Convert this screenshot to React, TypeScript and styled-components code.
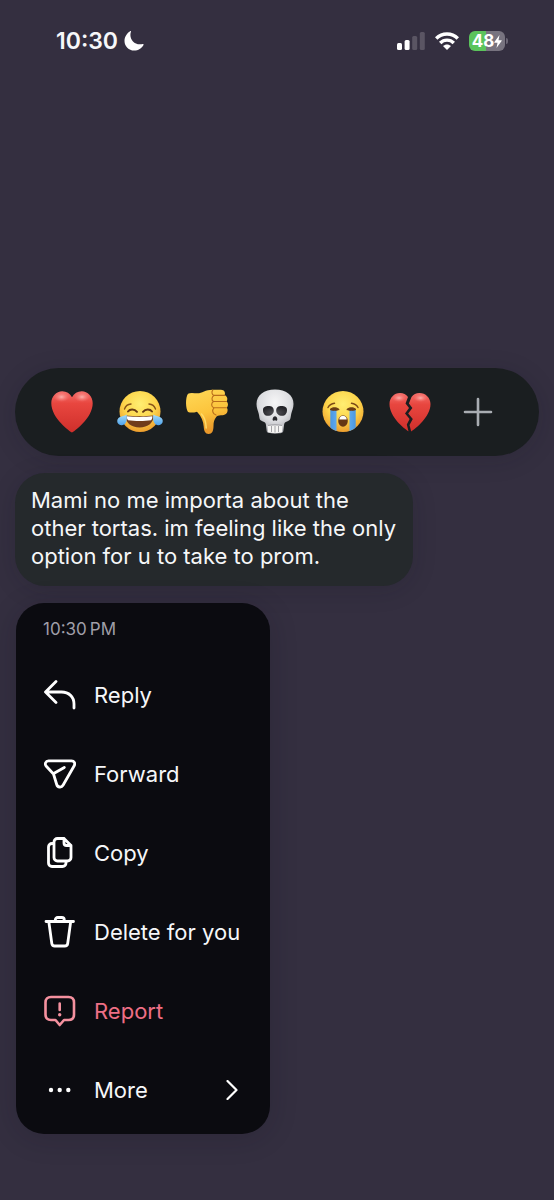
import React from "react";
import styled, { createGlobalStyle } from "styled-components";

const GlobalStyle = createGlobalStyle`
  * { box-sizing: border-box; }
  body {
    margin: 0;
    background: #342f40;
    font-family: Inter, "Liberation Sans", sans-serif;
    color: #f6f7f9;
  }
  button { font: inherit; color: inherit; background: none; border: 0; padding: 0; cursor: pointer; }
  svg { display: block; flex: none; }
`;

const Screen = styled.main`
  min-height: 100vh;
  display: flex;
  flex-direction: column;
  background: #342f40;
`;

const StatusBar = styled.header`
  display: flex;
  align-items: center;
  justify-content: space-between;
  height: 82px;
  padding: 0 46px 0 56px;
`;

const StatusGroup = styled.div<{ $gap: number }>`
  display: flex;
  align-items: center;
  gap: ${(p) => p.$gap}px;
`;

const Clock = styled.time`
  font-size: 23px;
  line-height: 28px;
  font-weight: 600;
`;

const Battery = styled.div`
  display: flex;
  align-items: center;
  gap: 1px;
`;

const BatteryBody = styled.div`
  display: flex;
  align-items: center;
  justify-content: center;
  width: 36px;
  height: 20px;
  border-radius: 6px;
  background: linear-gradient(90deg, #5bc45c 48%, #77737f 48%);
  font-size: 17px;
  line-height: 20px;
  font-weight: 700;
  color: #fff;
`;

const BatteryNub = styled.div`
  width: 2px;
  height: 6px;
  border-radius: 0 2px 2px 0;
  background: #6b6675;
`;

const Overlay = styled.section`
  display: flex;
  flex-direction: column;
  align-items: flex-start;
  gap: 17px;
  padding: 286px 15px 66px;
`;

const ReactionBar = styled.div`
  align-self: stretch;
  display: flex;
  align-items: center;
  justify-content: space-between;
  height: 88px;
  padding: 0 39px 0 35px;
  border-radius: 44px;
  background: #1a1e20;
  box-shadow: 0 4px 24px rgba(20, 16, 30, 0.16);
`;

const Bubble = styled.p`
  margin: 0;
  width: 398px;
  max-width: 100%;
  padding: 13px 16px 16px;
  border-radius: 30px;
  background: #25292c;
  box-shadow: 0 4px 24px rgba(20, 16, 30, 0.16);
  font-size: 22px;
  line-height: 28px;
`;

const Menu = styled.div`
  width: 254px;
  margin-left: 1px;
  padding-bottom: 5px;
  border-radius: 28px;
  background: #0b0b10;
  box-shadow: 0 4px 28px rgba(20, 16, 30, 0.2);
`;

const MenuTime = styled.time`
  display: block;
  height: 52px;
  padding: 14px 27px;
  font-size: 17px;
  line-height: 24px;
  color: #a09fa8;
`;

const MenuItem = styled.button<{ $danger?: boolean }>`
  display: flex;
  align-items: center;
  gap: 18px;
  width: 100%;
  height: 79px;
  padding: 0 32px 0 28px;
  text-align: left;
  font-size: 22px;
  line-height: 28px;
  white-space: nowrap;
  color: ${(p) => (p.$danger ? "#ee6f85" : "#f6f7f9")};
`;

const MenuLabel = styled.span`
  flex: 1;
`;

const HiddenDefs = styled.svg`
  position: absolute;
`;

const Emoji = ({ children }: { children: React.ReactNode }) => (
  <svg width="44" height="44" viewBox="0 0 44 44" overflow="visible" aria-hidden="true">{children}</svg>
);

const Defs = () => (
  <HiddenDefs width="0" height="0" aria-hidden="true">
    <defs>
      <radialGradient id="face" cx="50%" cy="32%" r="70%">
        <stop offset="0" stopColor="#ffee72" />
        <stop offset=".55" stopColor="#fdd54b" />
        <stop offset="1" stopColor="#ec9a2c" />
      </radialGradient>
      <linearGradient id="red" x1="0" y1="0" x2="0" y2="1">
        <stop offset="0" stopColor="#f4706c" />
        <stop offset=".3" stopColor="#e8463f" />
        <stop offset="1" stopColor="#cf2f2b" />
      </linearGradient>
      <radialGradient id="shine">
        <stop offset="0" stopColor="#ffc4c0" stopOpacity=".8" />
        <stop offset="1" stopColor="#ff8580" stopOpacity="0" />
      </radialGradient>
      <linearGradient id="thumb" x1="0" y1="0" x2=".3" y2="1">
        <stop offset="0" stopColor="#ffd958" />
        <stop offset=".6" stopColor="#fcc43c" />
        <stop offset="1" stopColor="#e9982a" />
      </linearGradient>
      <radialGradient id="bone" cx="50%" cy="30%" r="70%">
        <stop offset="0" stopColor="#f6f6f7" />
        <stop offset=".6" stopColor="#dcdde0" />
        <stop offset="1" stopColor="#a4a5ab" />
      </radialGradient>
      <radialGradient id="socket" cx="50%" cy="70%" r="60%">
        <stop offset="0" stopColor="#55555a" />
        <stop offset="1" stopColor="#242428" />
      </radialGradient>
      <linearGradient id="tear" x1="0" y1="0" x2="0" y2="1">
        <stop offset="0" stopColor="#a5dcfb" />
        <stop offset="1" stopColor="#4fa3ea" />
      </linearGradient>
      <linearGradient id="stream" x1="0" y1="0" x2="1" y2="0">
        <stop offset="0" stopColor="#4a97e2" />
        <stop offset=".5" stopColor="#76bcf6" />
        <stop offset="1" stopColor="#4a97e2" />
      </linearGradient>
      <clipPath id="faceClip"><circle cx="22" cy="21.5" r="20.5" /></clipPath>
    </defs>
  </HiddenDefs>
);

const Heart = () => (
  <Emoji>
    <path fill="url(#red)" d="M22 42.500C20.500 41.800 1.300 28.500 1.300 13.200 1.300 6.200 6.300 1.200 12.200 1.200c4.300 0 7.800 2.100 9.800 6 2-3.900 5.500-6 9.800-6 5.900 0 10.900 5 10.900 12C42.700 28.500 23.500 41.800 22 42.500Z" />
    <ellipse cx="11.5" cy="7" rx="8" ry="5" fill="url(#shine)" />
    <ellipse cx="32" cy="7" rx="8" ry="5" fill="url(#shine)" />
  </Emoji>
);

const Joy = () => (
  <Emoji>
    <circle cx="22" cy="21.5" r="20.5" fill="url(#face)" />
    <path d="M6.500 19c1-3 3.500-4.800 6.500-5M31 14c3 .2 5.500 2 6.500 5" stroke="#8a5518" strokeWidth="1.400" fill="none" strokeLinecap="round" />
    <path d="M10 21.500c2-2.600 6.500-2.600 9 .3M25 21.800c2.500-2.900 7-2.900 9-.3" stroke="#6a3c14" strokeWidth="2" fill="none" strokeLinecap="round" />
    <path d="M7.600 25.500c8 1 20 1 28 0C36 32.500 30 37.500 21.600 37.500S7.200 32.500 7.600 25.500Z" fill="#713c1b" />
    <path d="M8.800 26.300c8 .8 17.800.8 25.600 0 0 2-.5 3.300-1.300 4-6.500 1-16.500 1-23 0-.8-.7-1.300-2-1.300-4Z" fill="#fff" />
    <path d="M8.600 24.500c1 5.500-.4 10.300-4.600 10.700-3.900.3-6-3.700-3.900-6.700 1.700-2.400 5.300-1.800 8.500-4ZM35.400 24.500c-1 5.500.4 10.300 4.600 10.700 3.900.3 6-3.700 3.900-6.700-1.700-2.400-5.300-1.800-8.500-4Z" fill="url(#tear)" />
  </Emoji>
);

const ThumbsDown = () => (
  <Emoji>
    <path fill="url(#thumb)" d="M3 3.800c2.500-1.500 6.500-.5 9.500-.5C17 3.200 20.500-.3 27.500-.3H36c3.300 0 4.800 3 3.600 5.500 2.600.7 3.500 3.800 2 6.100 1.700 1.500 1.900 4.600.3 6.400 1.300 2 .8 4.800-1 6.200-1.200 1-2.800 1.200-4.900 1.400-2.500.3-4 .7-4.800 1.700-2 2.700-2.700 5.200-2.700 9 0 5-1.500 8-4.900 8-3.300 0-4.600-2.800-4.900-7.500-.3-5.300-2.200-10-6.700-14.800-3.300 1-6.500 1.200-9 .2C.6 18.500.2 8 3 3.800Z" />
    <path d="M29 5.400h10.500M28.500 11.500h13M29 17.800h12.500M29 5.400c-2.200-.8-2.700-3.500-1.200-5.200M28.500 11.500c-2.200-1.200-2-4.800.5-6.100M29 17.800c-2.800-.9-3.200-4.600-.5-6.300M31 25c-3.200-.8-4.500-4.800-2-7.200" stroke="#b96e1b" strokeWidth="1.100" fill="none" strokeLinecap="round" />
    <path d="M16.500 24c3.500 3.500 4.500 9 4.700 14" stroke="#ffdc69" strokeWidth="1.500" fill="none" strokeLinecap="round" />
  </Emoji>
);

const Skull = () => (
  <Emoji>
    <path fill="url(#bone)" d="M22-.5C11-.5 3.500 5 3.500 14c0 4 1.500 6.500 2.300 10 .7 3.200.3 5.500 2.700 6.800 2 1.100 3.800.9 4.300 3.200l.9 7c.2 1.800 2 2.500 8.300 2.500s8.100-.7 8.300-2.500l.9-7c.5-2.300 2.300-2.100 4.300-3.200 2.400-1.300 2-3.600 2.700-6.800.8-3.500 2.300-6 2.300-10C40.500 5 33-.5 22-.5Z" />
    <path d="M10 20c0-3 2.300-4 5.500-4s5.300 1.300 5.300 4.500-2.600 5.300-5.800 5.300S10 23.500 10 20ZM34 20c0-3-2.300-4-5.500-4s-5.300 1.300-5.300 4.500 2.600 5.300 5.800 5.300S34 23.500 34 20Z" fill="url(#socket)" />
    <path d="M22 26.300c-1.800 0-3 3.200-2 4.200.8.600 1.300-.2 2-.2s1.200.8 2 .2c1-1-.2-4.200-2-4.200Z" fill="#29292d" />
    <path d="M14.500 35.500h15l-.6 6.500c-3.500 1.500-10.400 1.500-13.800 0Z" fill="#f5f5f3" />
    <path d="M15 35.500c4-1 10-1 14 0M18.500 36v6M22 36v6.500M25.500 36v6" stroke="#9a9a9e" strokeWidth=".9" fill="none" />
  </Emoji>
);

const Sob = () => (
  <Emoji>
    <circle cx="22" cy="21.5" r="20.5" fill="url(#face)" />
    <g clipPath="url(#faceClip)">
      <path d="M9.300 20H15.500V42H9.300ZM28.500 20H34.700V42H28.500Z" fill="url(#stream)" />
    </g>
    <path d="M7 17.500c1.300-2.500 3.500-4 6.500-4.300M30.500 13.200c3 .3 5.200 1.800 6.500 4.300" stroke="#7b4a17" strokeWidth="1.500" fill="none" strokeLinecap="round" />
    <path d="M9 19.500c2.200-2.300 6.500-2.500 9.200 0-2.700 1-6.500 1.300-9.200 0ZM25.800 19.500c2.700-2.500 7-2.300 9.200 0-2.700 1.300-6.500 1-9.200 0Z" fill="#6a3c14" stroke="#6a3c14" strokeWidth="1" strokeLinejoin="round" />
    <ellipse cx="22" cy="31" rx="4.800" ry="5.700" fill="#653514" />
    <path d="M18.300 29.500c0-5 7.400-5 7.400 0Z" fill="#fff" />
  </Emoji>
);

const BrokenHeart = () => (
  <Emoji>
    <path fill="url(#red)" d="M20 7C18 4.500 15.500 3 12 3 6.200 3 1.500 7.800 1.500 14c0 13 14.500 24.500 19 27.300l-1.700-6.800 2.800-5.500-4.600-5.500 4-5.500-3.500-4.500Z" />
    <path fill="url(#red)" d="M23.500 7c2-2.500 4.500-4 8-4C37.500 3 42.500 7.800 42.500 14c0 13-15 24.500-19.300 27.500L21.500 35l3.300-6-4.600-5.500 4.200-5.500-3.500-4.500Z" />
    <ellipse cx="11" cy="8" rx="7" ry="4" fill="url(#shine)" />
    <ellipse cx="32.500" cy="8" rx="7" ry="4" fill="url(#shine)" />
  </Emoji>
);

const Plus = () => (
  <Emoji>
    <path d="M22 9v26M9 22h26" stroke="#a9adb2" strokeWidth="2.600" strokeLinecap="round" />
  </Emoji>
);

const Icon = ({ children }: { children: React.ReactNode }) => (
  <svg width="32" height="32" viewBox="0 0 32 32" fill="none" stroke="#fff" strokeWidth="2.800" strokeLinecap="round" strokeLinejoin="round" aria-hidden="true">
    {children}
  </svg>
);

const reactions = [
  { name: "Heart", art: <Heart /> },
  { name: "Laughing", art: <Joy /> },
  { name: "Thumbs down", art: <ThumbsDown /> },
  { name: "Skull", art: <Skull /> },
  { name: "Crying", art: <Sob /> },
  { name: "Broken heart", art: <BrokenHeart /> },
  { name: "Add reaction", art: <Plus /> },
];

const actions = [
  { label: "Reply", icon: <Icon><path d="M12 2.500 1.500 13 12 23.500M2 13h15.500C25 13 30 18 30 25v4" /></Icon> },
  { label: "Forward", icon: <Icon><path d="M4.500 2.800h23c2.700 0 4 2.600 2.700 4.900L19 27.300c-1.500 2.600-5.400 2.200-6.300-.8L9.500 16 2.300 8.300C.3 6 1.700 2.800 4.500 2.800ZM9.700 15.500 20.300 9.500" /></Icon> },
  { label: "Copy", icon: <Icon><path d="M20 1.500h-6.500c-2 0-3.500 1.500-3.500 3.500v15.500c0 2 1.500 3.500 3.500 3.500h10c2 0 3.500-1.500 3.500-3.500V8.500ZM20 1.500V6c0 1.500 1 2.500 2.500 2.500H27M10 6.500H8C6 6.500 4.500 8 4.500 10v16c0 2 1.500 3.500 3.500 3.500h10.500c2 0 3.500-1.500 3.500-3.500v-2" /></Icon> },
  { label: "Delete for you", icon: <Icon><path d="M2 5.500h27.500M11.300 5.500V4c0-1.500 1-2.500 2.500-2.500h4c1.500 0 2.500 1 2.500 2.500v1.500M4.800 5.500l3 22c.2 1.500 1.300 2.500 2.900 2.500h10.100c1.600 0 2.700-1 2.900-2.500l3-22" /></Icon> },
  {
    label: "Report",
    danger: true,
    icon: (
      <svg width="32" height="32" viewBox="0 0 32 32" fill="none" stroke="#f5919f" strokeWidth="2.600" strokeLinecap="round" strokeLinejoin="round" aria-hidden="true">
        <path d="M7 2h17.500c3.500 0 5.500 2 5.500 5.500v12c0 3.500-2 5.500-5.500 5.500H20l-4.300 5-4.200-5H7c-3.500 0-5.500-2-5.500-5.500v-12C1.500 4 3.500 2 7 2ZM15.700 8.500V15" />
        <circle cx="15.700" cy="19.700" r="1.700" fill="#f5919f" stroke="none" />
      </svg>
    ),
  },
  {
    label: "More",
    icon: <Icon><g fill="#fff" stroke="none"><circle cx="7" cy="16" r="2.200" /><circle cx="15.700" cy="16" r="2.200" /><circle cx="24.300" cy="16" r="2.200" /></g></Icon>,
    more: true,
  },
];

const Moon = () => (
  <svg width="20" height="20" viewBox="0 0 20 20" aria-hidden="true">
    <path fill="#fff" d="M7 .6C4.500 7.500 10 15 18.800 13c.7-.1 1.100.4.700 1C17.700 17.500 14.200 19.600 10.200 19.600 4.800 19.600.5 15.300.5 10 .5 6 2.700 2.200 6.200.2c.6-.3 1-.1.800.4Z" />
  </svg>
);

const Signal = () => (
  <svg width="28" height="18" viewBox="0 0 28 18" aria-hidden="true">
    <rect x="0" y="11" width="5" height="7" rx="1.500" fill="#fff" />
    <rect x="7.600" y="8" width="5" height="10" rx="1.500" fill="#fff" />
    <rect x="15.200" y="4" width="5" height="14" rx="1.500" fill="#5a5563" />
    <rect x="22.800" y="0" width="5" height="18" rx="1.500" fill="#5a5563" />
  </svg>
);

const Wifi = () => (
  <svg width="24" height="18" viewBox="0 0 24 18" fill="none" stroke="#fff" strokeWidth="3.400" aria-hidden="true">
    <path d="M1.200 6.500c6-6.100 15.600-6.100 21.600 0M5.200 11c3.800-3.800 9.800-3.800 13.600 0" />
    <path d="M12 18 8 14c2.200-2.100 5.800-2.100 8 0Z" fill="#fff" stroke="none" />
  </svg>
);

const Bolt = () => (
  <svg width="8" height="13" viewBox="0 0 8 13" aria-hidden="true">
    <path d="M5.500 0 .4 7c-.3.400-.1.700.3.700h2.800L2.500 13 7.600 6c.3-.4.1-.7-.3-.7H4.500Z" fill="#fff" />
  </svg>
);

const Chevron = () => (
  <svg width="12" height="20" viewBox="0 0 12 20" fill="none" stroke="#fff" strokeWidth="2.200" strokeLinecap="round" strokeLinejoin="round" aria-hidden="true">
    <path d="m1.500 1 9 9-9 9" />
  </svg>
);

export default function App() {
  return (
    <Screen>
      <GlobalStyle />
      <Defs />
      <StatusBar>
        <StatusGroup $gap={6}>
          <Clock>10:30</Clock>
          <Moon />
        </StatusGroup>
        <StatusGroup $gap={10}>
          <Signal />
          <Wifi />
          <Battery>
            <BatteryBody>48<Bolt /></BatteryBody>
            <BatteryNub />
          </Battery>
        </StatusGroup>
      </StatusBar>
      <Overlay>
        <ReactionBar>
          {reactions.map((r) => (
            <button key={r.name} type="button" aria-label={r.name}>{r.art}</button>
          ))}
        </ReactionBar>
        <Bubble>Mami no me importa about the other tortas. im feeling like the only option for u to take to prom.</Bubble>
        <Menu>
          <MenuTime>10:30{"\u2009"}PM</MenuTime>
          {actions.map((a) => (
            <MenuItem key={a.label} type="button" $danger={a.danger}>
              {a.icon}
              <MenuLabel>{a.label}</MenuLabel>
              {a.more && <Chevron />}
            </MenuItem>
          ))}
        </Menu>
      </Overlay>
    </Screen>
  );
}
